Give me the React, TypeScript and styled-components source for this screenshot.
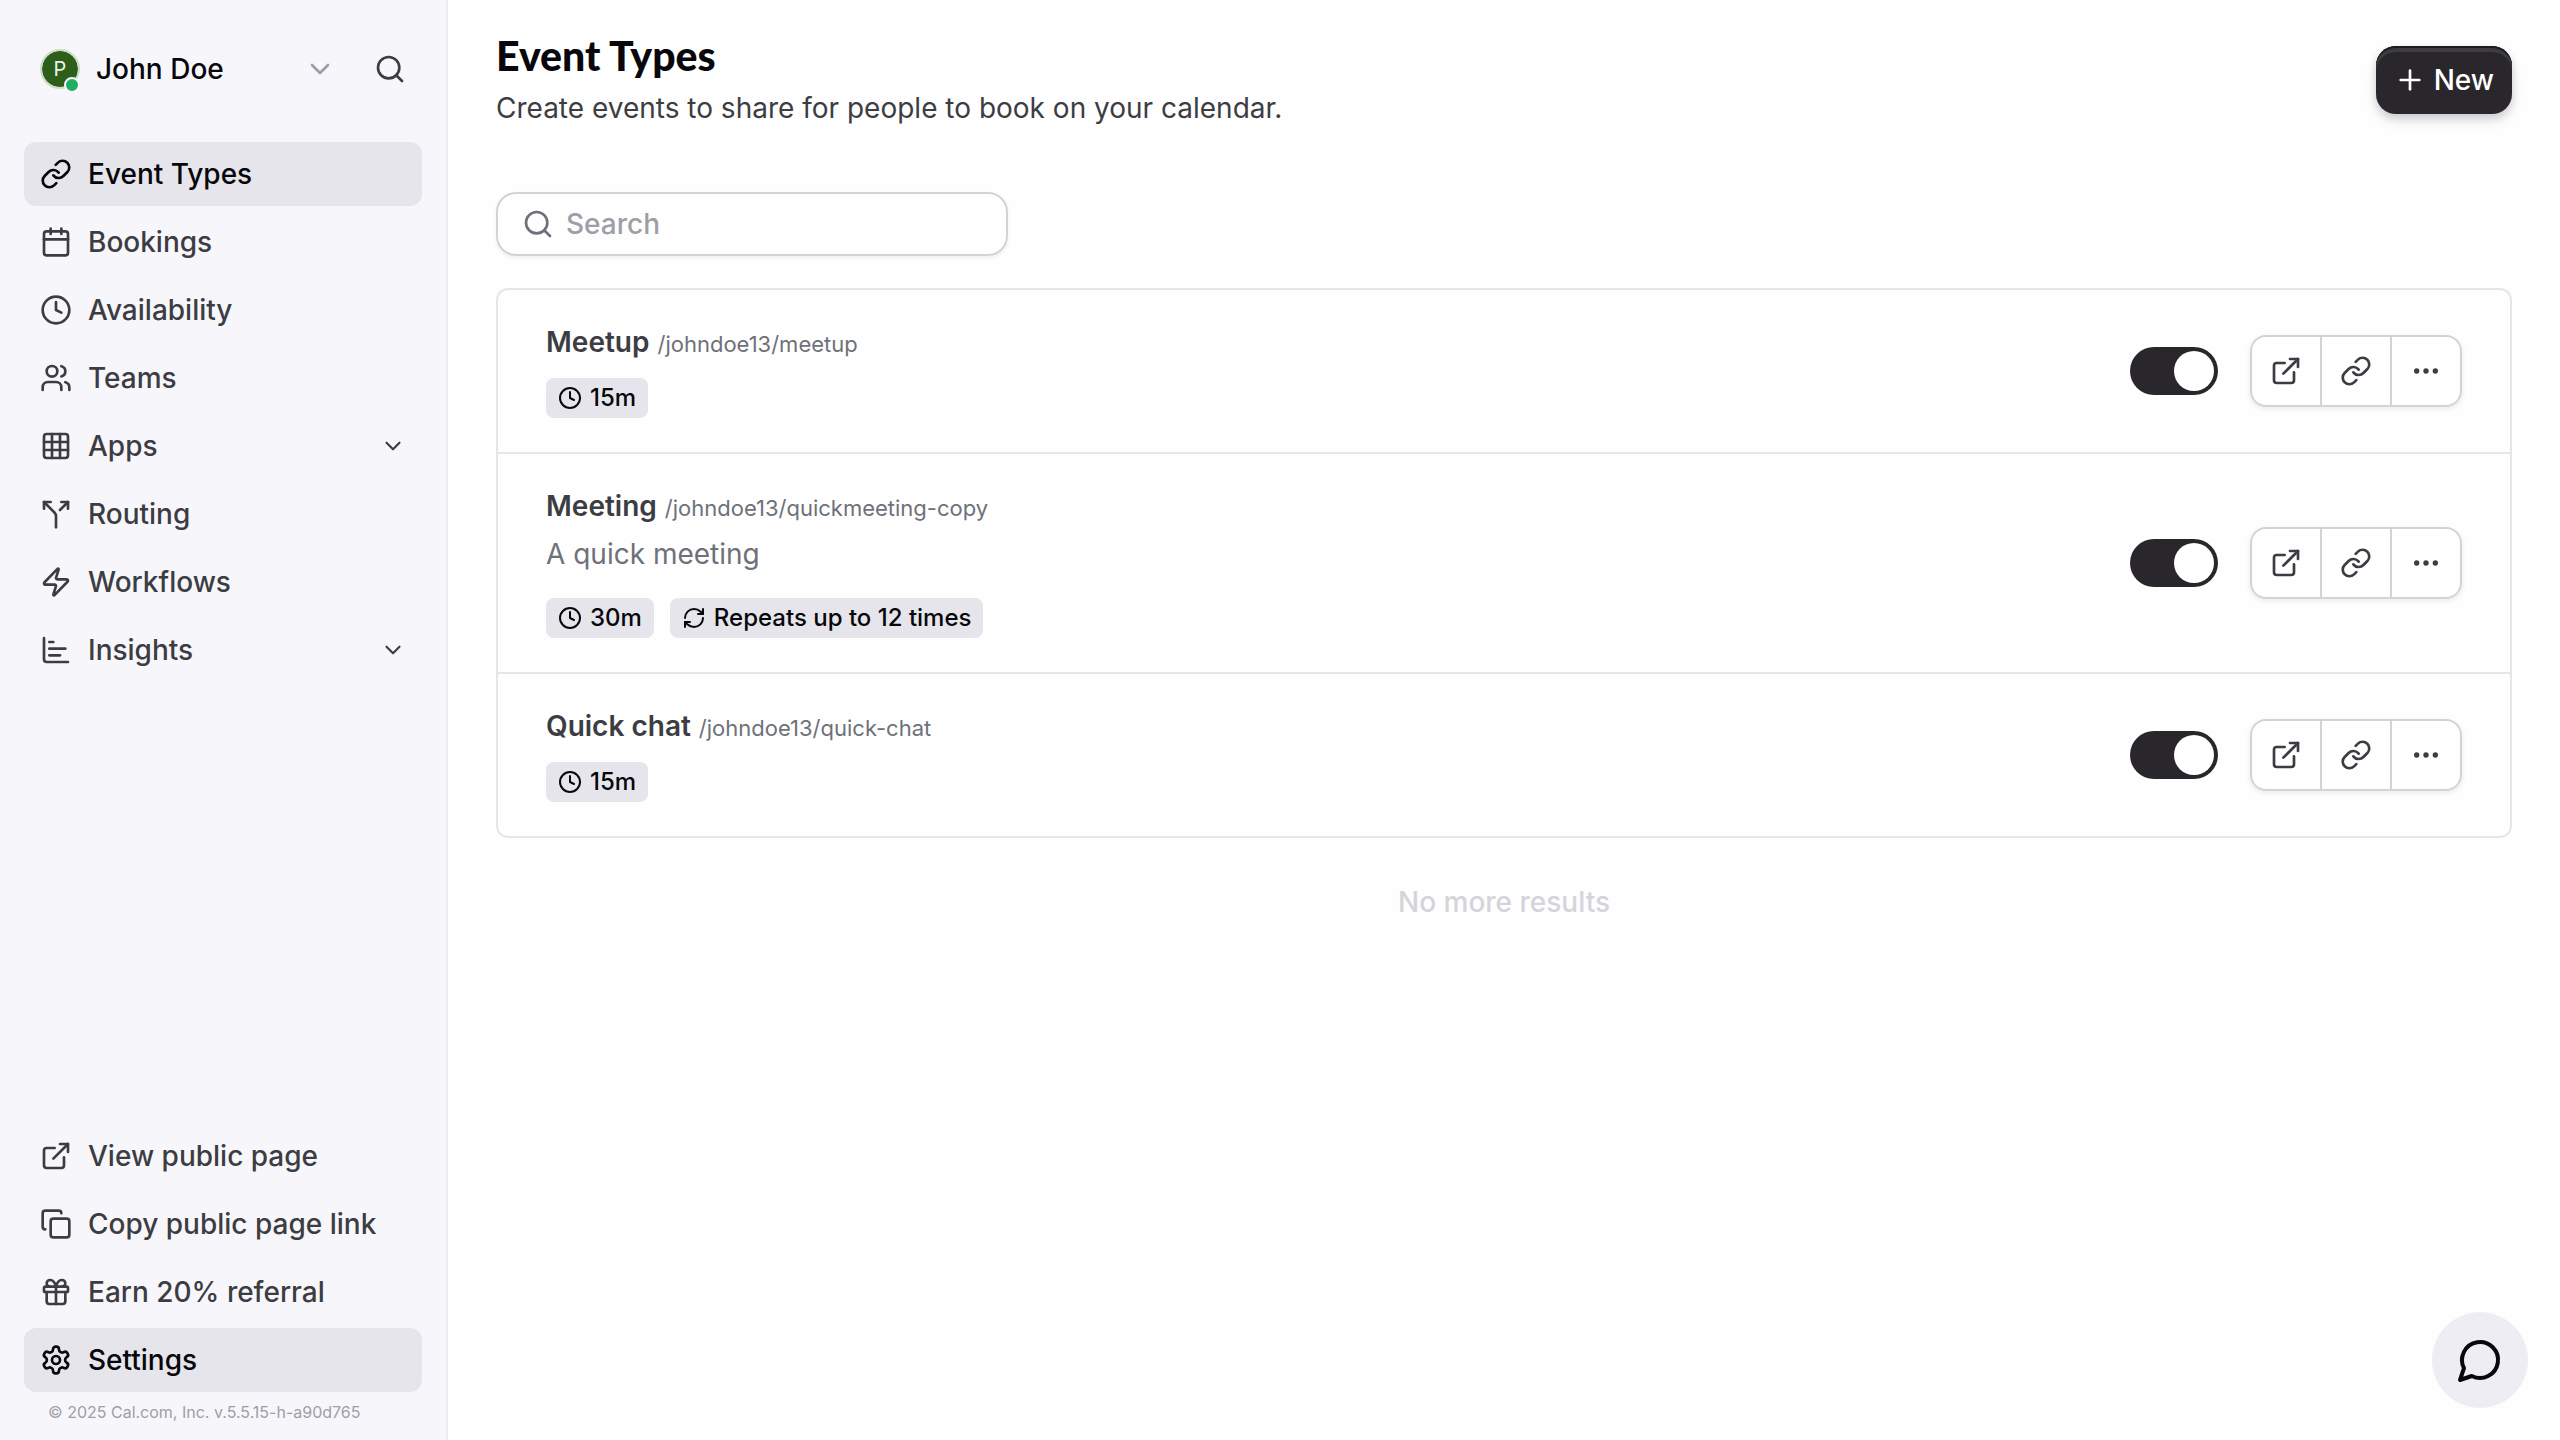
import React, { useState } from "react";
import styled, { createGlobalStyle } from "styled-components";
import {
  Calendar,
  ChartBar,
  ChevronDown,
  Clock,
  Copy,
  Ellipsis,
  ExternalLink,
  Grid3x3,
  Link,
  Plus,
  RefreshCw,
  Search,
  Split,
  Users,
  Zap,
} from "lucide-react";

const color = {
  page: "#fefefe",
  sidebar: "#f7f7fb",
  sidebarLine: "#edecf1",
  subtle: "#e6e5eb",
  chat: "#eeedf4",
  line: "#e6e6ea",
  border: "#d3d2d8",
  ink: "#08080c",
  text: "#3c3d43",
  soft: "#6e7179",
  faint: "#9e9ea7",
  ghost: "#d4d4da",
  dark: "#29272b",
};

const GlobalStyle = createGlobalStyle`
  *, *::before, *::after { box-sizing: border-box; }
  body {
    margin: 0;
    background: ${color.page};
    color: ${color.text};
    font-family: Inter, "Liberation Sans", sans-serif;
    font-size: 28px;
    line-height: 40px;
  }
  button, input { font: inherit; color: inherit; }
  button { cursor: pointer; }
  a { color: inherit; text-decoration: none; }
  svg { flex: none; display: block; }
`;

const Shell = styled.div`
  display: flex;
  min-height: 100vh;
`;

/* Sidebar */

const Sidebar = styled.aside`
  display: flex;
  flex-direction: column;
  flex: none;
  width: 448px;
  padding: 40px 24px 16px;
  background: ${color.sidebar};
  border-right: 2px solid ${color.sidebarLine};
`;

const Account = styled.div`
  display: flex;
  align-items: center;
  gap: 24px;
  height: 58px;
  margin-bottom: 44px;
  padding: 0 16px;
`;

const ProfileButton = styled.button`
  display: flex;
  flex: 1;
  align-items: center;
  gap: 16px;
  padding: 0;
  border: 0;
  background: none;
  color: ${color.ink};
  font-weight: 500;
  text-align: left;

  svg {
    margin-left: auto;
    margin-right: 14px;
    color: ${color.faint};
  }
`;

const Avatar = styled.span`
  position: relative;
  display: grid;
  place-items: center;
  width: 40px;
  height: 40px;
  border: 2px solid #cfdccb;
  border-radius: 50%;
  background: #2d5f1b;
  background-clip: padding-box;
  color: #eef4ea;
  font-size: 20px;
  line-height: 20px;
  font-weight: 400;

  &::after {
    content: "";
    position: absolute;
    right: -2px;
    bottom: -6px;
    width: 16px;
    height: 16px;
    border: 2px solid ${color.sidebar};
    border-radius: 50%;
    background: #1fae62;
  }
`;

const IconButton = styled.button`
  display: grid;
  padding: 0;
  border: 0;
  background: none;
`;

const Nav = styled.nav`
  display: flex;
  flex-direction: column;
  gap: 4px;

  & + & {
    margin-top: auto;
  }
`;

const NavLink = styled.a<{ $active?: boolean }>`
  display: flex;
  align-items: center;
  gap: 16px;
  height: 64px;
  padding: 0 16px;
  border-radius: 12px;
  background: ${(p) => (p.$active ? color.subtle : "transparent")};
  color: ${(p) => (p.$active ? color.ink : color.text)};
  font-weight: 500;
`;

const NavLabel = styled.span`
  flex: 1;
`;

const Copyright = styled.small`
  margin-top: 8px;
  padding: 0 24px;
  color: ${color.faint};
  font-size: 16px;
  line-height: 24px;
`;

/* Main column */

const Main = styled.main`
  flex: 1;
  min-width: 0;
  padding: 32px 48px;
`;

const PageHeader = styled.header`
  display: flex;
  align-items: flex-start;
  justify-content: space-between;
  margin-bottom: 64px;
`;

const Title = styled.h1`
  margin: 0;
  color: ${color.ink};
  font-family: Lato, Inter, sans-serif;
  font-size: 41px;
  line-height: 48px;
  font-weight: 900;
`;

const Subtitle = styled.p`
  margin: 8px 0 0;
`;

const NewButton = styled.button`
  display: flex;
  align-items: center;
  gap: 8px;
  height: 68px;
  margin-top: 14px;
  padding: 0 18px;
  border: 0;
  border-radius: 20px;
  background: ${color.dark};
  box-shadow:
    inset 0 2px 0 #1c1b1e,
    inset 0 6px 0 #3d3c40,
    0 4px 8px rgba(20, 16, 40, 0.18),
    0 8px 16px rgba(20, 16, 40, 0.06);
  color: #fff;
  font-weight: 500;
`;

const SearchBox = styled.label`
  display: flex;
  align-items: center;
  gap: 12px;
  width: 512px;
  max-width: 100%;
  height: 64px;
  margin-bottom: 32px;
  padding: 0 24px;
  border: 2px solid ${color.border};
  border-radius: 20px;
  box-shadow: 0 2px 4px rgba(20, 16, 40, 0.06);
  color: ${color.soft};
  font-weight: 500;
`;

const SearchInput = styled.input`
  flex: 1;
  min-width: 0;
  padding: 0;
  border: 0;
  outline: 0;
  background: none;
  color: ${color.text};

  &::placeholder {
    color: ${color.faint};
    opacity: 1;
  }
`;

const EventList = styled.ul`
  margin: 0;
  padding: 0;
  border: 2px solid ${color.line};
  border-radius: 12px;
  list-style: none;
`;

const EventRow = styled.li`
  display: flex;
  align-items: center;
  gap: 32px;
  padding: 0 48px;

  & + & {
    border-top: 2px solid ${color.line};
  }
`;

const EventInfo = styled.a`
  flex: 1;
  min-width: 0;
  padding: 32px 0 34px;
`;

const EventHeading = styled.div`
  display: flex;
  align-items: baseline;
  gap: 8px;
`;

const EventName = styled.h2`
  margin: 0;
  font-size: 28px;
  line-height: 40px;
  font-weight: 600;
`;

const EventSlug = styled.span`
  color: ${color.soft};
  font-size: 22px;
  line-height: 32px;
`;

const EventDescription = styled.p`
  margin: 8px 0 24px;
  color: ${color.soft};
`;

const Badges = styled.div`
  display: flex;
  gap: 16px;
  margin-top: 16px;
`;

const Badge = styled.span`
  display: flex;
  align-items: center;
  gap: 8px;
  height: 40px;
  padding: 0 12px;
  border-radius: 8px;
  background: ${color.subtle};
  color: ${color.ink};
  font-size: 24px;
  font-weight: 500;
`;

const Toggle = styled.input`
  flex: none;
  appearance: none;
  display: flex;
  width: 88px;
  height: 48px;
  margin: 0;
  padding: 4px;
  border-radius: 24px;
  background: ${color.border};
  cursor: pointer;

  &::before {
    content: "";
    width: 40px;
    height: 40px;
    border-radius: 50%;
    background: #fff;
  }

  &:checked {
    justify-content: flex-end;
    background: ${color.dark};
  }
`;

const ActionGroup = styled.div`
  display: flex;
  border: 2px solid ${color.border};
  border-radius: 16px;
  box-shadow: 0 2px 6px rgba(20, 16, 40, 0.08);
`;

const Action = styled.button`
  display: grid;
  place-items: center;
  box-sizing: content-box;
  width: 68px;
  height: 68px;
  padding: 0;
  border: 0;
  background: none;

  & + & {
    border-left: 2px solid ${color.border};
  }
`;

const EndNote = styled.p`
  margin: 44px 0 0;
  color: ${color.ghost};
  font-weight: 500;
  text-align: center;
`;

const ChatButton = styled.button`
  position: fixed;
  right: 32px;
  bottom: 32px;
  display: grid;
  place-items: center;
  width: 96px;
  height: 96px;
  padding: 0;
  border: 0;
  border-radius: 50%;
  background: ${color.chat};
  color: ${color.ink};
`;

/* Icons */

const ICON = { size: 32, strokeWidth: 2, "aria-hidden": true } as const;

type IconType = React.ComponentType<typeof ICON>;

const strokeProps = {
  viewBox: "0 0 24 24",
  fill: "none",
  stroke: "currentColor",
  strokeLinecap: "round",
  strokeLinejoin: "round",
  "aria-hidden": true,
} as const;

const GiftIcon: IconType = ({ size, strokeWidth }) => (
  <svg {...strokeProps} width={size} height={size} strokeWidth={strokeWidth}>
    <rect x="3" y="8" width="18" height="4" rx="1" />
    <path d="M12 8v13" />
    <path d="M19 12v7a2 2 0 0 1-2 2H7a2 2 0 0 1-2-2v-7" />
    <path d="M7.5 8a2.5 2.5 0 0 1 0-5A4.8 8 0 0 1 12 8a4.8 8 0 0 1 4.5-5 2.5 2.5 0 0 1 0 5" />
  </svg>
);

const SettingsIcon: IconType = ({ size, strokeWidth }) => (
  <svg {...strokeProps} width={size} height={size} strokeWidth={strokeWidth}>
    <path d="M12.22 2h-.44a2 2 0 0 0-2 2v.18a2 2 0 0 1-1 1.73l-.43.25a2 2 0 0 1-2 0l-.15-.08a2 2 0 0 0-2.73.73l-.22.38a2 2 0 0 0 .73 2.73l.15.1a2 2 0 0 1 1 1.72v.51a2 2 0 0 1-1 1.74l-.15.09a2 2 0 0 0-.73 2.73l.22.38a2 2 0 0 0 2.73.73l.15-.08a2 2 0 0 1 2 0l.43.25a2 2 0 0 1 1 1.73V20a2 2 0 0 0 2 2h.44a2 2 0 0 0 2-2v-.18a2 2 0 0 1 1-1.73l.43-.25a2 2 0 0 1 2 0l.15.08a2 2 0 0 0 2.73-.73l.22-.39a2 2 0 0 0-.73-2.73l-.15-.08a2 2 0 0 1-1-1.74v-.5a2 2 0 0 1 1-1.74l.15-.09a2 2 0 0 0 .73-2.73l-.22-.38a2 2 0 0 0-2.73-.73l-.15.08a2 2 0 0 1-2 0l-.43-.25a2 2 0 0 1-1-1.73V4a2 2 0 0 0-2-2z" />
    <circle cx="12" cy="12" r="3" />
  </svg>
);

const ChatIcon = () => (
  <svg {...strokeProps} width={48} height={48} strokeWidth={2}>
    <path d="M7.9 20A9 9 0 1 0 4 16.1L2 22Z" />
  </svg>
);

/* Data */

type NavItem = { label: string; icon: IconType; active?: boolean; expandable?: boolean };

const primaryNav: NavItem[] = [
  { label: "Event Types", icon: Link as IconType, active: true },
  { label: "Bookings", icon: Calendar as IconType },
  { label: "Availability", icon: Clock as IconType },
  { label: "Teams", icon: Users as IconType },
  { label: "Apps", icon: Grid3x3 as IconType, expandable: true },
  { label: "Routing", icon: Split as IconType },
  { label: "Workflows", icon: Zap as IconType },
  { label: "Insights", icon: ChartBar as IconType, expandable: true },
];

const secondaryNav: NavItem[] = [
  { label: "View public page", icon: ExternalLink as IconType },
  { label: "Copy public page link", icon: Copy as IconType },
  { label: "Earn 20% referral", icon: GiftIcon },
  { label: "Settings", icon: SettingsIcon, active: true },
];

type EventType = {
  name: string;
  slug: string;
  duration: string;
  description?: string;
  repeats?: string;
};

const eventTypes: EventType[] = [
  { name: "Meetup", slug: "/johndoe13/meetup", duration: "15m" },
  {
    name: "Meeting",
    slug: "/johndoe13/quickmeeting-copy",
    duration: "30m",
    description: "A quick meeting",
    repeats: "Repeats up to 12 times",
  },
  { name: "Quick chat", slug: "/johndoe13/quick-chat", duration: "15m" },
];

function NavList({ label, items }: { label: string; items: NavItem[] }) {
  return (
    <Nav aria-label={label}>
      {items.map(({ label: text, icon: Icon, active, expandable }) => (
        <NavLink key={text} href="#" $active={active}>
          <Icon {...ICON} />
          <NavLabel>{text}</NavLabel>
          {expandable && <ChevronDown size={26} strokeWidth={2} aria-hidden />}
        </NavLink>
      ))}
    </Nav>
  );
}

function EventItem({ event }: { event: EventType }) {
  const [enabled, setEnabled] = useState(true);
  return (
    <EventRow>
      <EventInfo href="#">
        <EventHeading>
          <EventName>{event.name}</EventName>
          <EventSlug>{event.slug}</EventSlug>
        </EventHeading>
        {event.description && <EventDescription>{event.description}</EventDescription>}
        <Badges>
          <Badge>
            <Clock size={24} strokeWidth={2} aria-hidden />
            {event.duration}
          </Badge>
          {event.repeats && (
            <Badge>
              <RefreshCw size={24} strokeWidth={2} aria-hidden />
              {event.repeats}
            </Badge>
          )}
        </Badges>
      </EventInfo>
      <Toggle
        type="checkbox"
        role="switch"
        aria-label={`Enable ${event.name}`}
        checked={enabled}
        onChange={(e) => setEnabled(e.target.checked)}
      />
      <ActionGroup>
        <Action type="button" aria-label="Preview">
          <ExternalLink {...ICON} />
        </Action>
        <Action type="button" aria-label="Copy link">
          <Link {...ICON} />
        </Action>
        <Action type="button" aria-label="More options">
          <Ellipsis {...ICON} />
        </Action>
      </ActionGroup>
    </EventRow>
  );
}

export default function App() {
  return (
    <>
      <GlobalStyle />
      <Shell>
        <Sidebar>
          <Account>
            <ProfileButton type="button">
              <Avatar>P</Avatar>
              John Doe
              <ChevronDown {...ICON} />
            </ProfileButton>
            <IconButton type="button" aria-label="Search">
              <Search {...ICON} />
            </IconButton>
          </Account>
          <NavList label="Primary" items={primaryNav} />
          <NavList label="Secondary" items={secondaryNav} />
          <Copyright>© 2025 Cal.com, Inc. v.5.5.15-h-a90d765</Copyright>
        </Sidebar>
        <Main>
          <PageHeader>
            <div>
              <Title>Event Types</Title>
              <Subtitle>Create events to share for people to book on your calendar.</Subtitle>
            </div>
            <NewButton type="button">
              <Plus {...ICON} />
              New
            </NewButton>
          </PageHeader>
          <SearchBox>
            <Search {...ICON} />
            <SearchInput type="search" placeholder="Search" aria-label="Search event types" />
          </SearchBox>
          <EventList>
            {eventTypes.map((event) => (
              <EventItem key={event.slug} event={event} />
            ))}
          </EventList>
          <EndNote>No more results</EndNote>
        </Main>
      </Shell>
      <ChatButton type="button" aria-label="Open chat">
        <ChatIcon />
      </ChatButton>
    </>
  );
}
